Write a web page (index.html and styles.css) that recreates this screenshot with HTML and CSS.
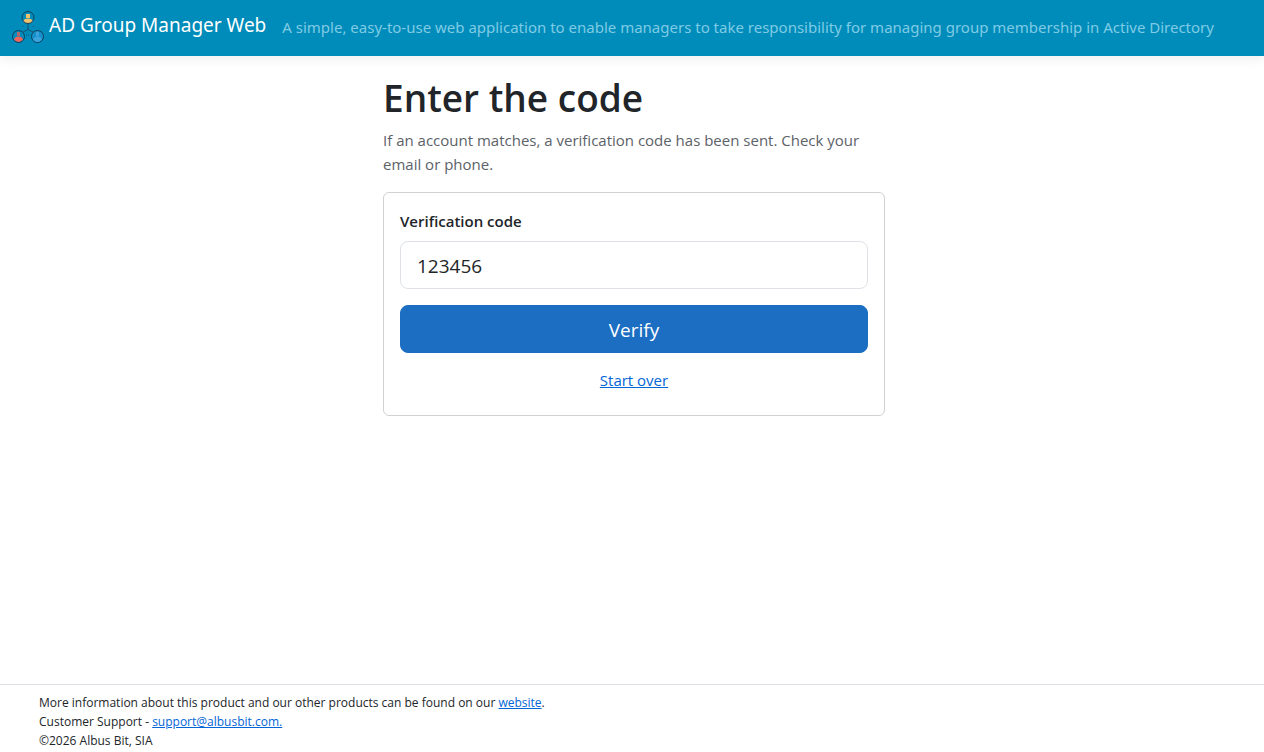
FILE: index.html
```html
<!DOCTYPE html>
<html lang="en">
<head>
    <meta charset="utf-8">
    <meta name="viewport" content="width=device-width, initial-scale=1">
    <title>Enter the code - AD Group Manager Web</title>
    <link rel="stylesheet" href="styles.css">
</head>
<body>
    <header class="navbar">
        <a class="brand" href="#">
            <svg class="logo" viewBox="0 0 32 32" aria-hidden="true">
                <g fill="none" stroke="#17506f">
                    <path d="M16 13v5.500M16 18.500l-5 2.500M16 18.500l5 2.500"/>
                    <path d="M10.500 15v2M21.500 15v2M14 24h4" stroke-dasharray="1 1"/>
                </g>
                <!-- Manager -->
                <path d="M11 10q1-2.500 5-2.500t5 2.500q-2 2.500-5 2.500t-5-2.500z" fill="#f0c26c"/>
                <rect x="14" y="3" width="4" height="4" fill="#f0c26c"/>
                <circle cx="16" cy="6.500" r="6" fill="none" stroke="#123f5c"/>
                <!-- Members -->
                <path d="M2 28.500q1-3 4.500-3t4.500 3q-2 2.500-4.500 2.500t-4.500-2.500z" fill="#f2635c"/>
                <path d="M5 21h3v4H5z" fill="#b0686f"/>
                <circle cx="6.500" cy="25.500" r="6" fill="none" stroke="#123f5c"/>
                <circle cx="25.500" cy="25.500" r="6" fill="#148fcb" stroke="#123f5c"/>
                <path d="M21 28.500q1-3 4.500-3t4.500 3q-2 2.500-4.500 2.500t-4.500-2.500zM24 21h3v4h-3z" fill="#3aa3dc"/>
            </svg>
            <span>AD Group Manager Web</span>
        </a>
        <span class="tagline">A simple, easy-to-use web application to enable managers to take responsibility for managing group membership in Active Directory</span>
    </header>

    <main class="container">
        <h1>Enter the code</h1>
        <p class="lead">If an account matches, a verification code has been sent. Check your email or phone.</p>
        <form class="card">
            <label for="code">Verification code</label>
            <input class="code-input" type="text" id="code" name="code" inputmode="numeric" value="123456">
            <button class="verify-btn" type="submit">Verify</button>
            <a class="start-over" href="#">Start over</a>
        </form>
    </main>

    <footer class="footer">
        <div>More information about this product and our other products can be found on our <a href="#">website</a>.</div>
        <div>Customer Support - <a href="#">support@albusbit.com.</a></div>
        <div>©2026 Albus Bit, SIA</div>
    </footer>
</body>
</html>
```
FILE: styles.css
```css
* {
    box-sizing: border-box;
}
body {
    display: flex;
    flex-direction: column;
    min-height: 100vh;
    margin: 0;
    font-family: "Segoe UI", "Open Sans", sans-serif;
    font-size: 15px;
    line-height: 24px;
    color: #212529;
    background-color: #fff;
}
a {
    color: #0366d6;
}
.navbar {
    display: flex;
    align-items: center;
    gap: 16px;
    min-height: 56px;
    padding: 0 12px 2px;
    background-color: #008cba;
    box-shadow: 0 2px 12px rgba(0,0,0,0.08);
    font-family: "Segoe UI", "Noto Sans", sans-serif;
}
.brand {
    display: flex;
    align-items: center;
    gap: 5px;
    flex-shrink: 0;
    font-size: 19px;
    color: #fff;
    text-decoration: none;
}
.brand span {
    padding-bottom: 4px;
}
.logo {
    width: 32px;
    height: 32px;
}
.tagline {
    color: #7fcbe5;
}
.container {
    flex: 1;
    width: 100%;
    max-width: 506px;
    margin: 0 auto;
    padding: 18px 0 0 4px;
}
h1 {
    margin: 0 0 6px;
    font-size: 37px;
    font-weight: 600;
    line-height: 48px;
}
.lead {
    margin: 0 0 16px;
    color: #5c6268;
}
.card {
    display: flex;
    flex-direction: column;
    padding: 16px 16px 23px;
    border: 1px solid #cfd1d3;
    border-radius: 6px;
}
.card label {
    margin-bottom: 8px;
    font-weight: 600;
}
.code-input {
    width: 100%;
    height: 48px;
    margin-bottom: 16px;
    padding: 10px 16px 8px;
    border: 1px solid #dee2e6;
    border-radius: 8px;
    font-family: inherit;
    font-size: 19px;
    color: inherit;
}
.verify-btn {
    height: 48px;
    margin-bottom: 15px;
    padding: 10px 16px 8px;
    border: 1px solid #1b6ec2;
    border-radius: 8px;
    background-color: #1b6ec2;
    font-family: inherit;
    font-size: 19px;
    color: #fff;
    cursor: pointer;
}
.verify-btn:hover {
    background-color: #1861ac;
}
.start-over {
    align-self: center;
}
.footer {
    padding: 8px 39px 2px;
    border-top: 1px solid #dee2e6;
    font-size: 12px;
    line-height: 19px;
}
```
